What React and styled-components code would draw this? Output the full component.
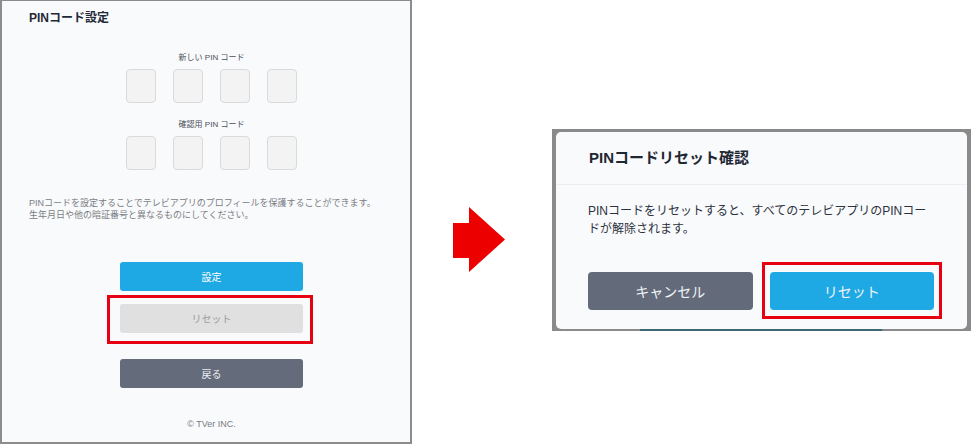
import React from "react";
import styled, { createGlobalStyle } from "styled-components";

const GlobalStyle = createGlobalStyle`
  html, body { margin: 0; padding: 0; background: #ffffff; }
  body {
    font-family: "Liberation Sans", "Noto Sans CJK JP", sans-serif;
    -webkit-font-smoothing: antialiased;
  }
  * { box-sizing: border-box; }
`;

const Page = styled.div`
  width: 971px;
  height: 444px;
  display: flex;
  align-items: flex-start;
  background: #ffffff;
`;

/* ---------- left: PIN setting screen ---------- */
const Panel = styled.section`
  width: 412px;
  height: 444px;
  flex: none;
  background: #f9fafc;
  border: 2px solid #8c8c8c;
  border-top-width: 1px;
  padding: 0 16px 0 27px;
  display: flex;
  flex-direction: column;
`;

const PanelTitle = styled.h1`
  margin: 9px 0 0;
  font-size: 12px;
  line-height: 16px;
  font-weight: 700;
  color: #1f2937;
`;

const PinGroup = styled.div`
  display: flex;
  flex-direction: column;
  align-items: center;
  margin-top: ${(p) => p.$top}px;
`;

const PinLabel = styled.div`
  font-size: 8px;
  line-height: 12px;
  color: #4b4f57;
  margin-bottom: 5px;
  white-space: pre;
`;

const PinRow = styled.div`
  display: flex;
  gap: 17px;
`;

const PinBox = styled.div`
  width: 30px;
  height: 34px;
  border-radius: 4px;
  background: #f3f3f3;
  border: 1.5px solid #dadada;
`;

const Description = styled.p`
  margin: 27px 0 0;
  font-size: 9px;
  line-height: 12px;
  color: #7a7d83;
  white-space: nowrap;
`;

const ButtonStack = styled.div`
  display: flex;
  flex-direction: column;
  align-items: center;
  margin-top: 41px;
`;

const PanelButton = styled.div`
  width: 183px;
  height: 29px;
  border-radius: 3px;
  display: flex;
  align-items: center;
  justify-content: center;
  font-size: 10px;
  background: ${(p) => p.$bg};
  color: ${(p) => p.$fg};
  margin-top: ${(p) => p.$top || 0}px;
`;

const Marked = styled.div`
  position: relative;
  margin-top: ${(p) => p.$top || 0}px;
  &::after {
    content: "";
    position: absolute;
    top: ${(p) => p.$t}px;
    left: ${(p) => p.$l}px;
    right: ${(p) => p.$r}px;
    bottom: ${(p) => p.$b}px;
    border: 3px solid #e60012;
    pointer-events: none;
  }
`;

const Footer = styled.div`
  margin-top: 30px;
  text-align: center;
  font-size: 9px;
  line-height: 12px;
  color: #777a80;
`;

/* ---------- arrow ---------- */
const ArrowSvg = styled.svg`
  flex: none;
  margin: 207px 0 0 41px;
  display: block;
`;

/* ---------- right: confirm dialog ---------- */
const Backdrop = styled.div`
  flex: none;
  width: 419px;
  height: 202px;
  margin: 129px 0 0 47px;
  padding: 3px 4px 2px 4px;
  background-color: #8a8a8a;
  background-image: linear-gradient(#3d6773, #3d6773);
  background-size: 242px 3px;
  background-position: 88px 100%;
  background-repeat: no-repeat;
`;

const Dialog = styled.div`
  width: 100%;
  height: 100%;
  background: #f9fafc;
  border-radius: 5px;
  display: flex;
  flex-direction: column;
`;

const DialogHeader = styled.div`
  height: 53px;
  flex: none;
  display: flex;
  align-items: center;
  padding: 0 33px;
  border-bottom: 1px solid #ebedf0;
`;

const DialogTitle = styled.h2`
  margin: 0;
  font-size: 15px;
  line-height: 20px;
  font-weight: 700;
  color: #1f2733;
`;

const DialogBody = styled.div`
  padding: 17px 33px 18px 32px;
  display: flex;
  flex-direction: column;
`;

const DialogText = styled.p`
  margin: 0;
  font-size: 12px;
  line-height: 18px;
  color: #2d333d;
  white-space: nowrap;
`;

const DialogActions = styled.div`
  margin-top: 34px;
  display: flex;
  gap: 17px;
`;

const DialogButton = styled.div`
  height: 38px;
  border-radius: 4px;
  display: flex;
  align-items: center;
  justify-content: center;
  font-size: 14px;
  background: ${(p) => p.$bg};
  color: #f2f4f7;
`;

const ActionSlot = styled.div`
  flex: 1;
  position: relative;
  display: flex;
  flex-direction: column;
  &[data-marked="true"]::after {
    content: "";
    position: absolute;
    top: -10px;
    left: -8px;
    right: -8px;
    bottom: -9px;
    border: 3px solid #e60012;
    pointer-events: none;
  }
`;

const PinInputs = () => (
  <PinRow>
    {[0, 1, 2, 3].map((i) => (
      <PinBox key={i} />
    ))}
  </PinRow>
);

export default function App() {
  return (
    <>
      <GlobalStyle />
      <Page>
        <Panel>
          <PanelTitle>PINコード設定</PanelTitle>
          <PinGroup $top={26}>
            <PinLabel>新しい PIN コード</PinLabel>
            <PinInputs />
          </PinGroup>
          <PinGroup $top={16}>
            <PinLabel>確認用 PIN コード</PinLabel>
            <PinInputs />
          </PinGroup>
          <Description>
            PINコードを設定することでテレビアプリのプロフィールを保護することができます。
            <br />
            生年月日や他の暗証番号と異なるものにしてください。
          </Description>
          <ButtonStack>
            <PanelButton $bg="#1fa9e4" $fg="#ffffff">設定</PanelButton>
            <Marked $top={13} $t={-9} $l={-13} $r={-10} $b={-11}>
              <PanelButton $bg="#e0e0e0" $fg="#9a9a9a">リセット</PanelButton>
            </Marked>
            <PanelButton $bg="#646b7b" $fg="#eceef2" $top={26}>戻る</PanelButton>
          </ButtonStack>
          <Footer>© TVer INC.</Footer>
        </Panel>

        <ArrowSvg width="52" height="65" viewBox="0 0 52 65" aria-hidden="true">
          <polygon points="0,16 16,16 16,0 52,32.5 16,65 16,51 0,51" fill="#ec0000" />
        </ArrowSvg>

        <Backdrop>
          <Dialog>
            <DialogHeader>
              <DialogTitle>PINコードリセット確認</DialogTitle>
            </DialogHeader>
            <DialogBody>
              <DialogText>
                PINコードをリセットすると、すべてのテレビアプリのPINコー
                <br />
                ドが解除されます。
              </DialogText>
              <DialogActions>
                <ActionSlot>
                  <DialogButton $bg="#636b7b">キャンセル</DialogButton>
                </ActionSlot>
                <ActionSlot data-marked="true">
                  <DialogButton $bg="#1fa9e4">リセット</DialogButton>
                </ActionSlot>
              </DialogActions>
            </DialogBody>
          </Dialog>
        </Backdrop>
      </Page>
    </>
  );
}
